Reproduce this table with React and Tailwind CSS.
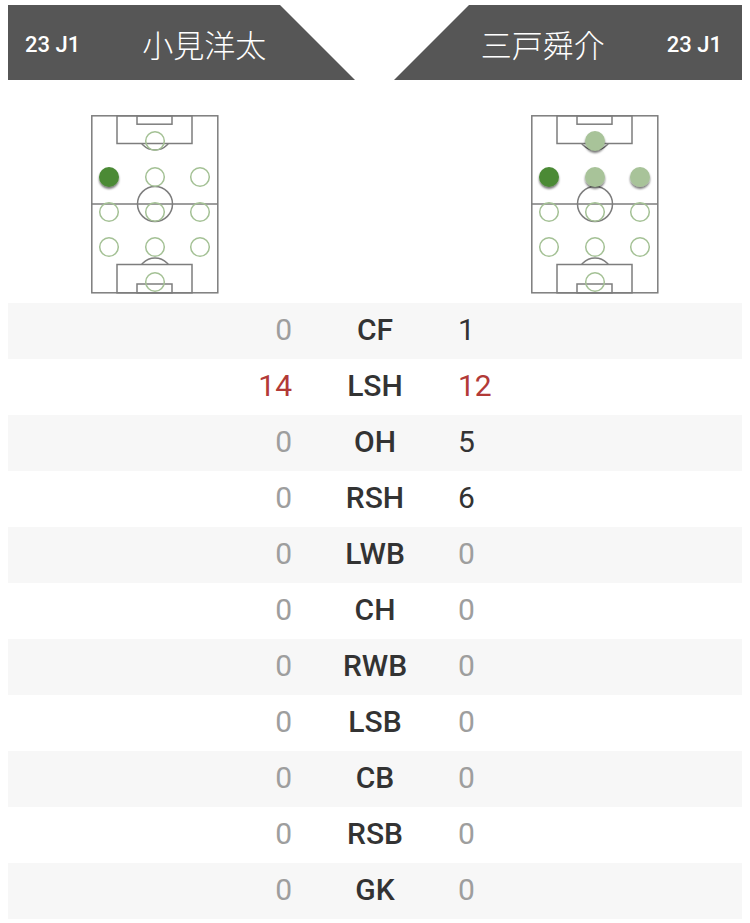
const rows = [
  { pos: "CF", a: 0, b: 1 },
  { pos: "LSH", a: 14, b: 12 },
  { pos: "OH", a: 0, b: 5 },
  { pos: "RSH", a: 0, b: 6 },
  { pos: "LWB", a: 0, b: 0 },
  { pos: "CH", a: 0, b: 0 },
  { pos: "RWB", a: 0, b: 0 },
  { pos: "LSB", a: 0, b: 0 },
  { pos: "CB", a: 0, b: 0 },
  { pos: "RSB", a: 0, b: 0 },
  { pos: "GK", a: 0, b: 0 },
];

// spot coordinates on the pitch drawing
const spots = {
  CF: [64, 26],
  LSH: [18, 62],
  OH: [64, 62],
  RSH: [109, 62],
  LWB: [18, 97],
  CH: [64, 97],
  RWB: [109, 97],
  LSB: [18, 132],
  CB: [64, 132],
  RSB: [109, 132],
  GK: [64, 167],
};

function Pitch({ side, id }) {
  const max = Math.max(...rows.map((r) => r[side]));
  return (
    <svg width="128" height="179" viewBox="0 0 128 179">
      <defs>
        <filter id={id} x="-50%" y="-50%" width="200%" height="200%">
          <feDropShadow dx="0" dy="2" stdDeviation="0.8" floodColor="#000" floodOpacity="0.55" />
        </filter>
        <clipPath id={id + "t"}>
          <rect x="0" y="28.5" width="128" height="20" />
        </clipPath>
        <clipPath id={id + "b"}>
          <rect x="0" y="120" width="128" height="29" />
        </clipPath>
      </defs>
      <g fill="none" stroke="#7d7d7d" strokeWidth="1.5">
        <rect x="0.8" y="0.8" width="126" height="177" />
        <line x1="0.8" y1="89" x2="126.8" y2="89" />
        <circle cx="64" cy="89" r="17.5" />
        <rect x="26" y="0.8" width="75" height="27.7" />
        <rect x="46" y="0.8" width="35" height="8.4" />
        <circle cx="64" cy="18" r="17" clipPath={`url(#${id}t)`} />
        <rect x="26" y="149.5" width="75" height="28.3" />
        <rect x="46" y="169" width="35" height="8.8" />
        <circle cx="64" cy="160" r="17" clipPath={`url(#${id}b)`} />
      </g>
      {rows.map((r) => {
        const [x, y] = spots[r.pos];
        const v = r[side];
        if (v === 0)
          return (
            <circle key={r.pos} cx={x} cy={y} r="9.3" fill="none" stroke="#a4c195" strokeWidth="1.5" />
          );
        return (
          <circle
            key={r.pos}
            cx={x}
            cy={y}
            r="10"
            fill={v === max ? "#4b8a36" : "#a8c399"}
            filter={`url(#${id})`}
          />
        );
      })}
    </svg>
  );
}

export default function App() {
  return (
    <main className="min-h-screen bg-white font-['Roboto','Noto_Sans_CJK_JP',sans-serif]">
      {/* Header banners */}
      <div className="flex justify-between px-2 pt-[5px]">
        <div className="flex h-[75px] w-[347px] items-center bg-[#565656] pl-[17px] pt-1 text-white [clip-path:polygon(0_0,272px_0,100%_100%,0_100%)]">
          <span className="text-[22px] font-medium">23 J1</span>
          <span className="ml-[62px] text-[31px] font-light font-['Noto_Sans_CJK_JP',sans-serif]">小見洋太</span>
        </div>
        <div className="flex h-[75px] w-[348px] items-center justify-end bg-[#565656] pr-[20px] pt-1 text-white [clip-path:polygon(75px_0,100%_0,100%_100%,0_100%)]">
          <span className="text-[31px] font-light font-['Noto_Sans_CJK_JP',sans-serif]">三戸舜介</span>
          <span className="ml-[62px] text-[22px] font-medium">23 J1</span>
        </div>
      </div>

      {/* Formation pitches */}
      <div className="mt-[35px] flex justify-between px-[91px]">
        <Pitch side="a" id="pa" />
        <Pitch side="b" id="pb" />
      </div>

      {/* Position counts */}
      <div className="mt-[9px] px-2">
        {rows.map((r, i) => (
          <div
            key={r.pos}
            className={`grid h-14 grid-cols-[284px_166px_1fr] items-center pb-1 text-[30px] ${
              i % 2 === 0 ? "bg-[#f7f7f7]" : "bg-white"
            }`}
          >
            <span className={`text-right ${r.a === 0 ? "text-[#9e9e9e]" : r.a === 14 ? "text-[#b23a37]" : "text-[#333]"}`}>
              {r.a}
            </span>
            <span className="text-center font-medium text-[#333]">{r.pos}</span>
            <span className={`${r.b === 0 ? "text-[#9e9e9e]" : r.b === 12 ? "text-[#b23a37]" : "text-[#333]"}`}>
              {r.b}
            </span>
          </div>
        ))}
      </div>
    </main>
  );
}
